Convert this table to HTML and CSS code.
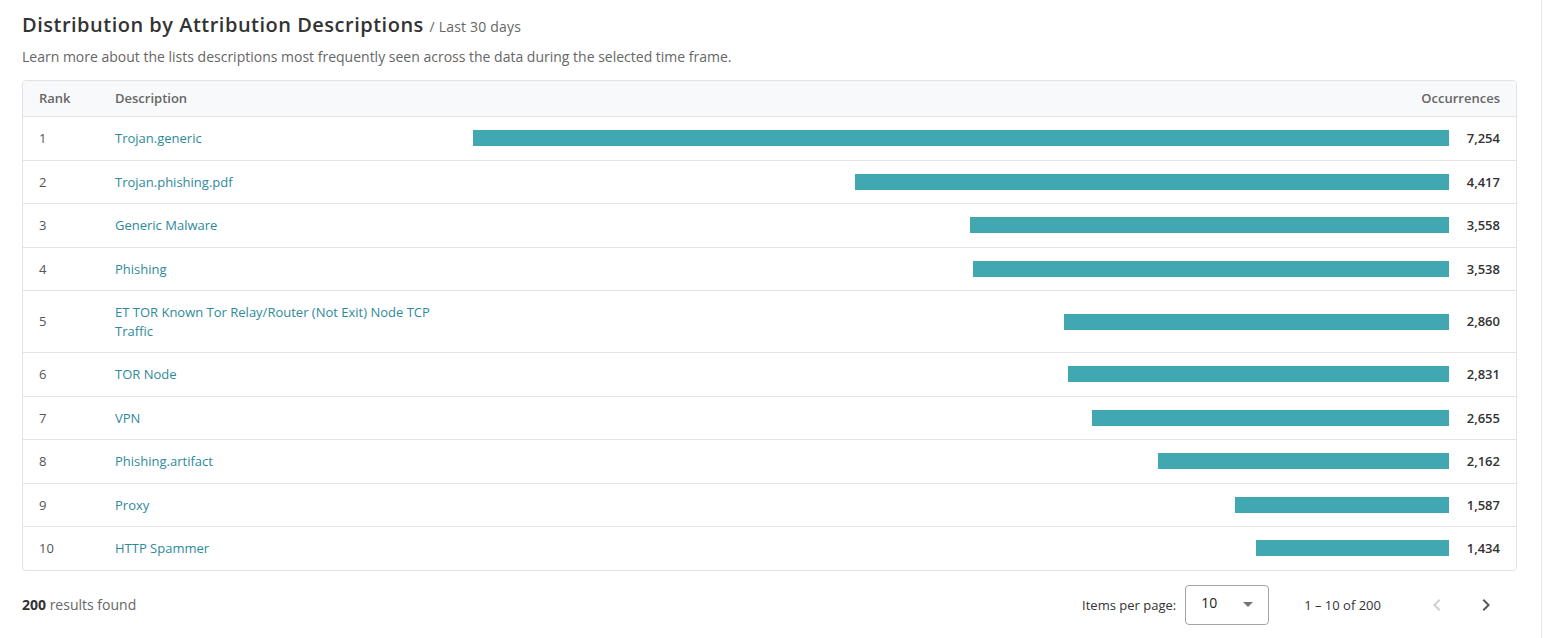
FILE: index.html
```html
<!DOCTYPE html>
<html lang="en">
<head>
<meta charset="utf-8">
<title>Distribution by Attribution Descriptions</title>
<link rel="stylesheet" href="styles.css">
</head>
<body>
<div class="page">
  <header class="head">
    <h1 class="title">Distribution by Attribution Descriptions <span class="range">/ Last 30 days</span></h1>
    <p class="lead">Learn more about the lists descriptions most frequently seen across the data during the selected time frame.</p>
  </header>

  <div class="table">
    <div class="row row-head">
      <div class="c-rank">Rank</div>
      <div class="c-desc">Description</div>
      <div class="c-num c-num-head">Occurrences</div>
    </div>
    <div class="row"><div class="c-rank">1</div><div class="c-desc"><a class="link">Trojan.generic</a></div><div class="c-bar"><span class="bar" style="width:100%"></span></div><div class="c-num">7,254</div></div>
    <div class="row"><div class="c-rank">2</div><div class="c-desc"><a class="link">Trojan.phishing.pdf</a></div><div class="c-bar"><span class="bar" style="width:60.89%"></span></div><div class="c-num">4,417</div></div>
    <div class="row"><div class="c-rank">3</div><div class="c-desc"><a class="link">Generic Malware</a></div><div class="c-bar"><span class="bar" style="width:49.05%"></span></div><div class="c-num">3,558</div></div>
    <div class="row"><div class="c-rank">4</div><div class="c-desc"><a class="link">Phishing</a></div><div class="c-bar"><span class="bar" style="width:48.77%"></span></div><div class="c-num">3,538</div></div>
    <div class="row"><div class="c-rank">5</div><div class="c-desc"><a class="link">ET TOR Known Tor Relay/Router (Not Exit) Node TCP Traffic</a></div><div class="c-bar"><span class="bar" style="width:39.43%"></span></div><div class="c-num">2,860</div></div>
    <div class="row"><div class="c-rank">6</div><div class="c-desc"><a class="link">TOR Node</a></div><div class="c-bar"><span class="bar" style="width:39.03%"></span></div><div class="c-num">2,831</div></div>
    <div class="row"><div class="c-rank">7</div><div class="c-desc"><a class="link">VPN</a></div><div class="c-bar"><span class="bar" style="width:36.60%"></span></div><div class="c-num">2,655</div></div>
    <div class="row"><div class="c-rank">8</div><div class="c-desc"><a class="link">Phishing.artifact</a></div><div class="c-bar"><span class="bar" style="width:29.80%"></span></div><div class="c-num">2,162</div></div>
    <div class="row"><div class="c-rank">9</div><div class="c-desc"><a class="link">Proxy</a></div><div class="c-bar"><span class="bar" style="width:21.88%"></span></div><div class="c-num">1,587</div></div>
    <div class="row"><div class="c-rank">10</div><div class="c-desc"><a class="link">HTTP Spammer</a></div><div class="c-bar"><span class="bar" style="width:19.77%"></span></div><div class="c-num">1,434</div></div>
  </div>

  <footer class="foot">
    <div class="count"><b>200</b> results found</div>
    <div class="pager">
      <span class="ipp-label">Items per page:</span>
      <div class="select">
        <span class="select-val">10</span>
        <span class="caret"></span>
      </div>
      <span class="range-label">1 – 10 of 200</span>
      <button class="nav nav-prev" aria-label="Previous page">
        <svg width="24" height="24" viewBox="0 0 24 24"><path d="M15.41 7.41 14 6l-6 6 6 6 1.41-1.41L10.83 12z" fill="currentColor"/></svg>
      </button>
      <button class="nav nav-next" aria-label="Next page">
        <svg width="24" height="24" viewBox="0 0 24 24"><path d="M10 6 8.59 7.41 13.17 12l-4.58 4.59L10 18l6-6z" fill="currentColor"/></svg>
      </button>
    </div>
  </footer>
</div>
</body>
</html>
```

FILE: styles.css
```css
* { box-sizing: border-box; }

html, body {
  margin: 0;
  padding: 0;
  background: #fff;
}

body {
  font-family: "Open Sans", "Liberation Sans", sans-serif;
  color: #444;
}

.page {
  width: 1542px;
  height: 638px;
  padding: 12px 24px 0 22px;
  border-right: 1px solid #e9e9e9;
}

.title {
  margin: 0;
  font-size: 20px;
  line-height: 26px;
  font-weight: 600;
  color: #333;
  letter-spacing: 0.5px;
}

.range {
  font-size: 14px;
  font-weight: 400;
  color: #666;
  letter-spacing: 0.2px;
}

.lead {
  margin: 7px 0 0;
  font-size: 14px;
  line-height: 20px;
  color: #666;
}

.table {
  margin-top: 13px;
  border: 1px solid #e3e3e3;
  border-radius: 4px;
  overflow: hidden;
}

.row {
  display: grid;
  grid-template-columns: 92px 358px 976px 1fr;
  align-items: center;
  padding: 12px 0;
  font-size: 13px;
  line-height: 18.5px;
  border-top: 1px solid #e3e3e3;
}

.row-head {
  border-top: 0;
  padding: 8px 0;
  line-height: 19px;
  background: #f8f9fa;
  font-weight: 600;
  color: #666;
}

.c-rank {
  padding-left: 16px;
  color: #555;
}

.row-head .c-rank { color: #666; }

.c-desc {
  padding-right: 24px;
}

.link {
  color: #2e8a9b;
  text-decoration: none;
}

.c-bar {
  display: flex;
  justify-content: flex-end;
}

.bar {
  display: block;
  height: 16px;
  background: #41a8b2;
}

.c-num {
  text-align: right;
  padding-right: 16px;
  font-weight: 600;
  color: #333;
}

.c-num-head {
  grid-column: 3 / 5;
  color: #666;
}

.foot {
  display: flex;
  align-items: center;
  justify-content: space-between;
  margin-top: 14px;
}

.count {
  font-size: 14px;
  color: #666;
}

.count b {
  color: #333;
  font-weight: 700;
}

.pager {
  display: flex;
  align-items: center;
  font-size: 13px;
  color: #333;
  padding-right: 11px;
}

.ipp-label {
  margin-right: 9px;
}

.select {
  width: 84px;
  height: 40px;
  border: 1px solid #a5a5a5;
  border-radius: 4px;
  display: flex;
  align-items: center;
  justify-content: space-between;
  padding: 0 15px 0 15px;
  font-size: 14px;
  color: #222;
}

.select-val {
  margin-top: -4px;
}

.caret {
  width: 0;
  height: 0;
  border-left: 5px solid transparent;
  border-right: 5px solid transparent;
  border-top: 5px solid #757575;
}

.range-label {
  margin-left: 35px;
  margin-right: 36px;
}

.nav {
  width: 40px;
  height: 40px;
  border: 0;
  background: none;
  padding: 0;
  display: flex;
  align-items: center;
  justify-content: center;
  cursor: pointer;
}

.nav-prev { color: #d0d0d0; margin-right: 9px; }
.nav-next { color: #5a5a5a; }
```
